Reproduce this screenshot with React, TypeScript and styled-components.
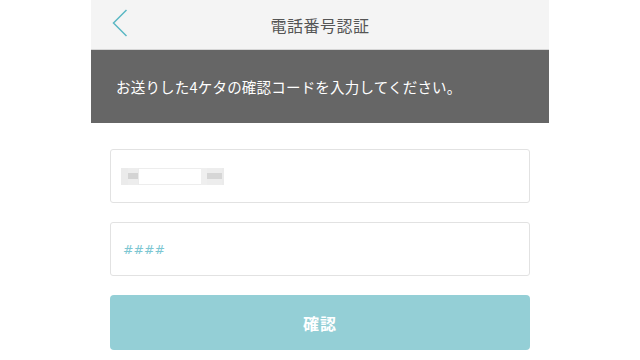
import React from "react";
import styled, { createGlobalStyle } from "styled-components";

const Global = createGlobalStyle`
  html, body { margin: 0; padding: 0; background: #ffffff; }
  body { font-family: "Noto Sans CJK JP", "Noto Sans", sans-serif; }
`;

const Page = styled.div`
  width: 458px;
  margin: 0 auto;
  height: 360px;
  background: #ffffff;
  display: flex;
  flex-direction: column;
`;

const Header = styled.header`
  height: 49px;
  background: #f4f4f4;
  border-bottom: 1px solid #d6d6d6;
  display: grid;
  grid-template-columns: 60px 1fr 60px;
  align-items: center;
`;

const BackButton = styled.button`
  border: none;
  background: transparent;
  padding: 0 0 3px 20px;
  height: 49px;
  display: flex;
  align-items: center;
  cursor: pointer;
`;

const Title = styled.h1`
  margin: 0;
  text-align: center;
  font-size: 16px;
  font-weight: 400;
  color: #555555;
  letter-spacing: 0.5px;
`;

const Banner = styled.div`
  height: 73px;
  background: #666666;
  display: flex;
  align-items: center;
  padding: 0 0 0 25px;
  color: #ffffff;
  font-size: 14.5px;
  letter-spacing: 0.2px;
`;

const Form = styled.div`
  padding: 26px 19px 0 19px;
  display: flex;
  flex-direction: column;
  gap: 19px;
`;

const Field = styled.div`
  height: 54px;
  border: 1px solid #e2e2e2;
  border-radius: 3px;
  box-sizing: border-box;
  display: flex;
  align-items: center;
  padding-left: 10px;
  background: #fff;
`;

const Mosaic = styled.div`
  display: flex;
  align-items: center;
  height: 17px;
  background: #ededed;
  filter: blur(0.6px);
`;

const Block = styled.div<{ $w: number; $c: string; $h?: number }>`
  width: ${(p) => p.$w}px;
  height: ${(p) => p.$h ?? 17}px;
  background: ${(p) => p.$c};
`;

const Placeholder = styled.span`
  font-family: "DejaVu Sans", sans-serif;
  font-style: italic;
  font-size: 12.5px;
  color: #7cc6d2;
  padding-left: 2px;
  letter-spacing: 0px;
`;

const Submit = styled.button`
  height: 55px;
  border: none;
  border-radius: 4px;
  background: #94cfd6;
  color: #ffffff;
  font-family: "Noto Sans CJK JP", sans-serif;
  font-size: 16px;
  font-weight: 700;
  letter-spacing: 1px;
`;

export default function App() {
  return (
    <>
      <Global />
      <Page>
        <Header>
          <BackButton aria-label="back">
            <svg width="18" height="28" viewBox="0 0 18 28">
              <path d="M15.5 1 L2.5 14 L15.5 27" fill="none" stroke="#5bb8c4" strokeWidth="1.5" />
            </svg>
          </BackButton>
          <Title>電話番号認証</Title>
          <div />
        </Header>
        <Banner>お送りした4ケタの確認コードを入力してください。</Banner>
        <Form>
          <Field>
            <Mosaic>
              <Block $w={7} $c="#ebebeb" />
              <Block $w={10} $c="#d4d4d4" $h={6} />
              <Block $w={1} $c="#ebebeb" />
              <Block $w={62} $c="#ffffff" $h={15} />
              <Block $w={6} $c="#efefef" />
              <Block $w={15} $c="#d6d6d6" $h={6} />
              <Block $w={2} $c="#ebebeb" />
            </Mosaic>
          </Field>
          <Field>
            <Placeholder>####</Placeholder>
          </Field>
          <Submit>確認</Submit>
        </Form>
      </Page>
    </>
  );
}
